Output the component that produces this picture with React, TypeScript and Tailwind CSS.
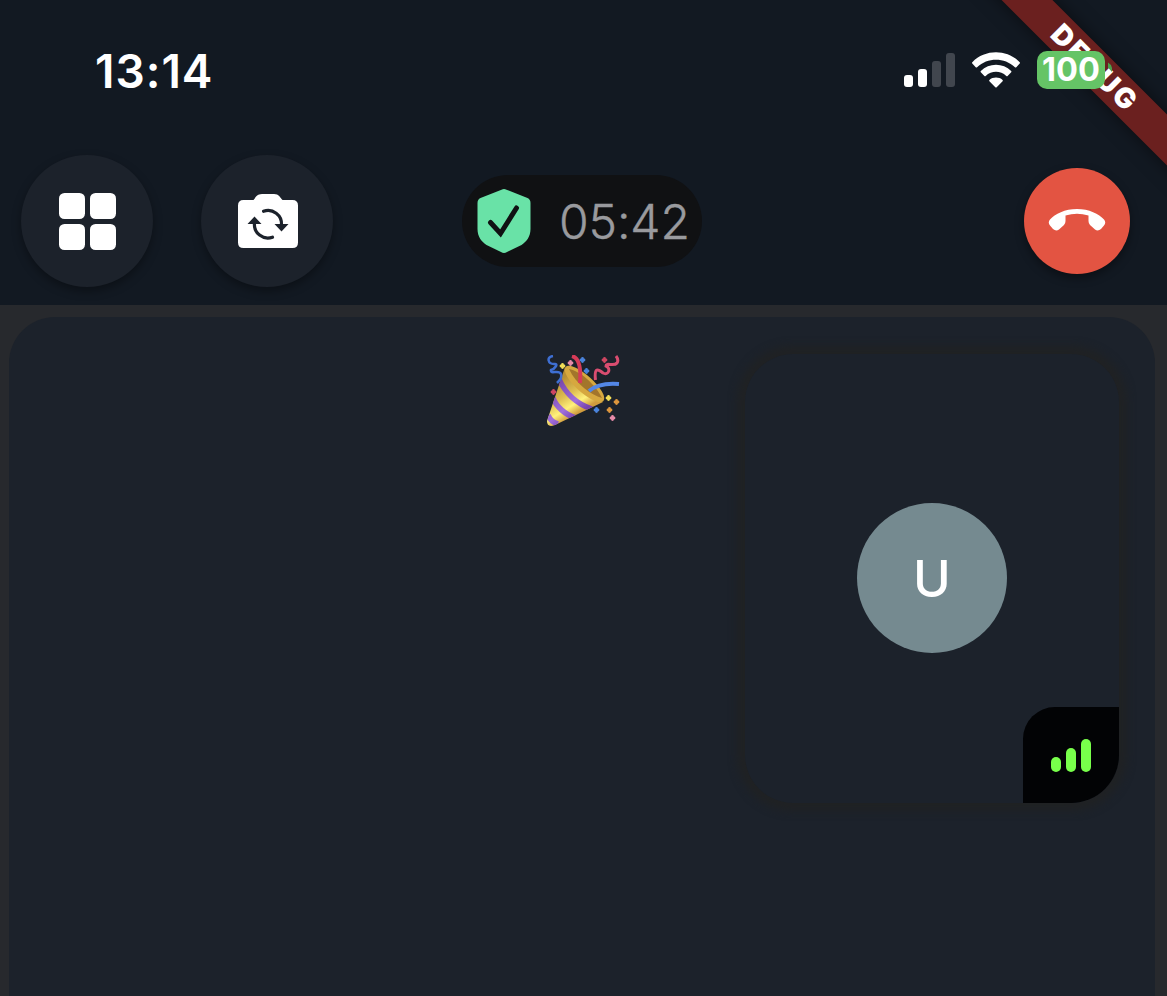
import React from "react";

function GridButton() {
  return (
    <button className="flex size-[132px] items-center justify-center rounded-full bg-[#1c222b] shadow-[0_4px_10px_rgba(0,0,0,0.35)]">
      <span className="grid grid-cols-2 gap-[5px]">
        <span className="size-[26px] rounded-[5.5px] bg-white" />
        <span className="size-[26px] rounded-[5.5px] bg-white" />
        <span className="size-[26px] rounded-[5.5px] bg-white" />
        <span className="size-[26px] rounded-[5.5px] bg-white" />
      </span>
    </button>
  );
}

function FlipCameraButton() {
  return (
    <button className="flex size-[132px] items-center justify-center rounded-full bg-[#1c222b] pl-0.5 shadow-[0_4px_10px_rgba(0,0,0,0.35)]">
      <svg width="60" height="54" viewBox="0 0 60 54">
        <path d="M5.5 6H15.5C17.500 3.500 19 0 24 0H36C41 0 42 3.500 44.500 6H54.500Q60 6 60 11.500V48.500Q60 54 54.500 54H5.500Q0 54 0 48.500V11.500Q0 6 5.500 6Z" fill="#fff" />
        <g fill="none" stroke="#1c222b" strokeWidth="3.200" strokeLinecap="round">
          <path d="M25.500 17.300A13.500 13.500 0 0 1 43.500 31" />
          <path d="M34.500 43.200A13.500 13.500 0 0 1 16.500 29" />
        </g>
        <path d="M9.500 30L16.500 22.500L23.500 30ZM36.500 30H50.500L43.500 37.500Z" fill="#1c222b" />
      </svg>
    </button>
  );
}

function CallTimer() {
  return (
    <div className="flex h-[92px] w-[240px] items-center rounded-full bg-[#101113] pl-[15px]">
      <svg width="54" height="64" viewBox="0 0 54 64">
        <path d="M24.500 .7Q27 -.5 29.500 .7L50.500 9Q53.500 10.300 53.500 14V40C53.500 48 49 53 44.500 56L30 63Q27 65 24 63L9.500 56C5 53 .5 48 .5 40V14Q.5 10.300 3.500 9Z" fill="#69e2a7" />
        <path d="M13.500 33.500L23.500 44.500L39.500 19" fill="none" stroke="#101113" strokeWidth="5" strokeLinecap="round" />
      </svg>
      <span className="mt-0.5 ml-[28px] text-[48px] leading-none font-light tracking-[-0.1px] text-[#999a9e] [-webkit-text-stroke:0.4px_#999a9e]">05:42</span>
    </div>
  );
}

function HangUpButton() {
  return (
    <button className="flex size-[106px] items-center justify-center rounded-full bg-[#e35442] pb-0.5 shadow-[0_4px_10px_rgba(0,0,0,0.4)]">
      <svg width="58" height="22" viewBox="0 0 58 22">
        <path d="M29 0C17 0 7 5 2 10.500Q-.5 13.500 2 16.500L5 20Q8 22.500 11 20.500L16 16Q17.500 14.500 17.500 12V6.500Q29 3.200 40.500 6.500V12Q40.500 14.500 42 16L47 20.500Q50 22.500 53 20L56 16.500Q58.500 13.500 56 10.500C51 5 41 0 29 0Z" fill="#fff" />
      </svg>
    </button>
  );
}

function StatusBar() {
  return (
    <div className="flex h-[142px] items-center justify-between pr-[55px] pb-0.5 pl-[95px]">
      <span className="mt-0.5 text-[46px] leading-none font-semibold tracking-[1px] text-white">13:14</span>
      <div className="flex items-center">
        <div className="flex items-end gap-[5px]">
          <span className="h-3 w-[9px] rounded-[3px] bg-white" />
          <span className="h-[18px] w-[9px] rounded-[3px] bg-white" />
          <span className="h-[26px] w-[9px] rounded-[3px] bg-[#41464e]" />
          <span className="h-[34px] w-[9px] rounded-[3px] bg-[#41464e]" />
        </div>
        <svg className="ml-[16px]" width="50" height="36" viewBox="0 0 50 36">
          <path d="M1.300 10.200C14 -3 36 -3 48.700 10.200Q49.300 10.900 48.700 11.600L45.300 15.200Q44.600 15.900 43.900 15.200C33.500 5.300 16.500 5.300 6.100 15.200Q5.400 15.900 4.700 15.200L1.300 11.600Q.7 10.900 1.300 10.200Z" fill="#fff" />
          <path d="M9.800 19C18 10.700 32 10.700 40.200 19Q40.800 19.700 40.200 20.300L36.600 23.900Q36 24.400 35.300 23.900C29.500 18.500 20.500 18.500 14.700 23.900Q14 24.400 13.400 23.900L9.800 20.300Q9.200 19.700 9.800 19Z" fill="#fff" />
          <path d="M18.400 28C22 24.800 28 24.800 31.600 28Q32.200 28.700 31.600 29.300L25.700 35.200Q25 35.800 24.300 35.200L18.400 29.300Q17.800 28.700 18.400 28Z" fill="#fff" />
        </svg>
        <div className="relative z-20 ml-[16px] flex items-center">
          <span className="flex h-[38px] w-[68px] items-center justify-center rounded-[10px] bg-[#65c466] text-[32.5px] leading-none font-bold text-white">100</span>
          <svg width="7" height="16" viewBox="0 0 7 16">
            <path d="M3 .5Q6 2 7 6V10L3 5.500Z" fill="#4aa04c" />
          </svg>
        </div>
      </div>
    </div>
  );
}

function DebugRibbon() {
  return (
    <div className="absolute top-0 right-0 z-10 size-[300px] overflow-hidden">
      <div className="absolute top-[50px] left-[28px] flex h-[36px] w-[400px] rotate-45 items-center justify-center bg-[#6b201f] text-[28px] font-black tracking-[2.6px] text-white shadow-[0_0_18px_rgba(0,0,0,0.5)]">
        DEBUG
      </div>
    </div>
  );
}

function PartyPopper() {
  return (
    <svg width="74" height="72" viewBox="0 0 74 72">
      <defs>
        <linearGradient id="cone" x1="12" y1="26" x2="32" y2="58" gradientUnits="userSpaceOnUse">
          <stop offset="0" stopColor="#b78e34" />
          <stop offset=".45" stopColor="#dfbf52" />
          <stop offset=".75" stopColor="#fff17c" />
          <stop offset="1" stopColor="#d19c3d" />
        </linearGradient>
        <linearGradient id="band" x1="8" y1="26" x2="34" y2="58" gradientUnits="userSpaceOnUse">
          <stop offset="0" stopColor="#7140a5" />
          <stop offset=".7" stopColor="#a06fdc" />
          <stop offset="1" stopColor="#7743ae" />
        </linearGradient>
        <clipPath id="coneClip">
          <path d="M19 12C27 26 42 39 57 47L9 70Q1 73 1 66Z" />
        </clipPath>
      </defs>
      <path d="M19 12C27 26 42 39 57 47L9 70Q1 73 1 66Z" fill="url(#cone)" />
      <g clipPath="url(#coneClip)" fill="none" stroke="url(#band)" strokeWidth="5.500">
        <path d="M13 24C19 38 31 49 46 54" />
        <path d="M7 43C10 51 19 60 30 63" />
        <path d="M2 60Q5 67 12 69" />
      </g>
      <ellipse cx="38.500" cy="29" rx="25.500" ry="8.500" transform="rotate(42 38.500 29)" fill="#d6a83f" />
      <path d="M23 14C34 16 49 29 56 43C45 40 30 29 23 14Z" fill="#a3752b" />
      <path d="M26 1C34 3 35 15 34 28" fill="none" stroke="#d63b58" strokeWidth="4" />
      <path d="M43 36C50 30 61 28 73 29" fill="none" stroke="#5387e6" strokeWidth="4" />
      <path d="M7 1C0 2 2 9 8 9C13 8 9 14 5 15C4 20 13 14 15 19C16 23 14 25 11 28" fill="none" stroke="#3e6fd3" strokeWidth="2.500" />
      <path d="M49.500 25C48 12 52 14 57 18C63 21 65 13 60 11C60 7 68 12 71 8Q73 5 70 1" fill="none" stroke="#d94d70" strokeWidth="3" />
      <g strokeWidth="2.800" strokeLinecap="round">
        <path d="M15 11h3m-1.500-1.500v3M61 43h3m-1.500-1.500v3" stroke="#f2df58" />
        <path d="M23 8h3m-1.500-1.500v3M65 63h3m-1.500-1.500v3" stroke="#e78ba9" />
        <path d="M35 5h3m-1.500-1.500v3M39 16h3m-1.500-1.500v3M49 55h3m-1.500-1.500v3" stroke="#4a83db" />
        <path d="M57 5h3m-1.500-1.500v3M6 37h3m-1.500-1.500v3" stroke="#ce4661" />
        <path d="M69 47h3m-1.500-1.500v3M62 55h3m-1.500-1.500v3" stroke="#dd963d" />
      </g>
    </svg>
  );
}

function SelfView() {
  return (
    <div className="flex h-[449px] w-[374px] flex-col justify-between rounded-[48px] bg-[#1c222b] shadow-[0_0_9px_8px_#202224]">
      <div className="mx-auto mt-[149px] flex size-[150px] items-center justify-center rounded-full bg-[#758a90] pt-0.5 text-[51px] font-medium text-white">
        U
      </div>
      <div className="flex size-24 items-end justify-center gap-[5px] self-end rounded-tl-[32px] rounded-br-[48px] bg-[#020305] pb-[31px]">
        <span className="h-[15.5px] w-[10px] rounded-full bg-[#78ff4b]" />
        <span className="h-[24.5px] w-[10px] rounded-full bg-[#78ff4b]" />
        <span className="h-[33.5px] w-[10px] rounded-full bg-[#78ff4b]" />
      </div>
    </div>
  );
}

export default function App() {
  return (
    <div className="relative flex h-[996px] w-[1167px] flex-col overflow-hidden bg-[#27292d] font-['Inter',sans-serif]">
      <header className="h-[305px] shrink-0 bg-[#121922]">
        <StatusBar />
        <div className="flex h-[158px] items-center pr-[37px] pl-[21px]">
          <div className="flex gap-12">
            <GridButton />
            <FlipCameraButton />
          </div>
          <div className="ml-[129px]">
            <CallTimer />
          </div>
          <div className="ml-auto">
            <HangUpButton />
          </div>
        </div>
      </header>
      <main className="mt-3 mr-3 ml-[9px] grid flex-1 grid-cols-[1fr_auto_1fr] items-start rounded-t-[46px] bg-[#1c222b] pt-[37px] pr-9">
        <div className="col-start-2 mt-px ml-[38px]">
          <PartyPopper />
        </div>
        <div className="justify-self-end">
          <SelfView />
        </div>
      </main>
      <DebugRibbon />
    </div>
  );
}
